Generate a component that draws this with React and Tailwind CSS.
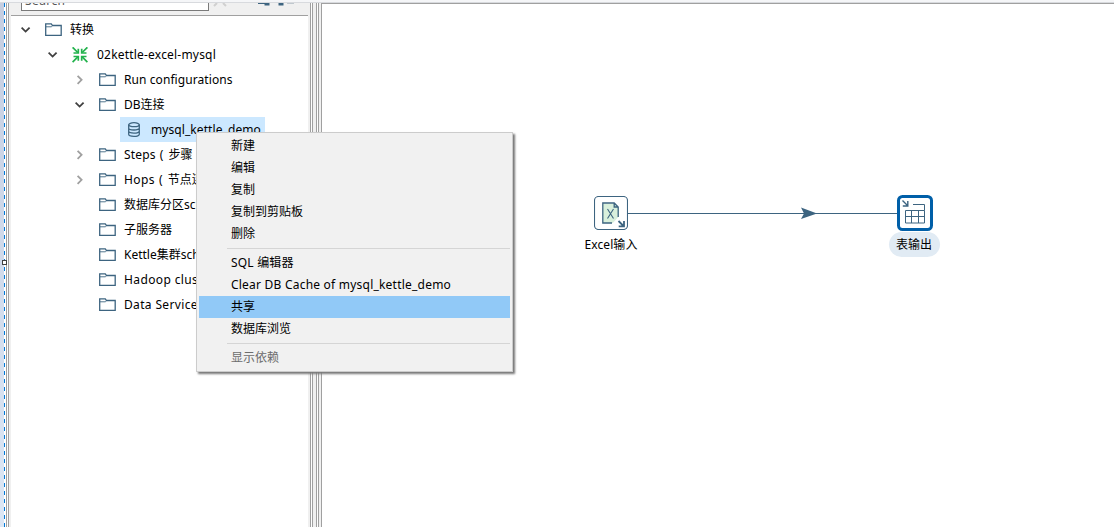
import React from 'react';

const FONT = "font-['Noto_Sans','Noto_Sans_CJK_SC',sans-serif]";

function Chevron({ open }) {
  return (
    <svg className="h-[10px] w-[10px] shrink-0" viewBox="0 0 10 10" fill="none" strokeWidth="1.8">
      {open ? <path d="M.6 2.6l4 4 4-4" stroke="#404040" /> : <path d="M2.6 .8l4 4-4 4" stroke="#a0a0a0" />}
    </svg>
  );
}

function Folder() {
  return (
    <svg className="h-[14px] w-[17px] shrink-0" viewBox="0 0 17 14" fill="none" stroke="#3d6480">
      <path d="M.7 12.400V.8h5.600l1.200 1.700h8.700v9.900z" strokeWidth="1.3" />
      <path d="M1 3.800h5.300l1.300-1.200" strokeWidth=".9" />
    </svg>
  );
}

function Transform() {
  return (
    <svg className="h-4 w-4 shrink-0" viewBox="0 0 16 16" fill="none" stroke="#22b24c" strokeWidth="1.7">
      <path d="M.6 .3l5.2 5.2M15.4 .3l-5.2 5.2M.6 15.1l5.2-5.2M15.4 15.1l-5.2-5.2" />
      <path d="M6.3 1.8v4.2H1.5M9.7 1.8v4.2h4.8M6.3 13.8V9.5H1.5M9.7 13.8V9.5h4.8" />
    </svg>
  );
}

function Database() {
  return (
    <svg className="h-4 w-[14px] shrink-0" viewBox="0 0 14 16" fill="none" stroke="#3d6480" strokeWidth="1.3">
      <ellipse cx="7" cy="2.7" rx="5.3" ry="2" />
      <path d="M1.7 2.7v9.6c0 1.3 2.2 2.1 5.3 2.1s5.3-.8 5.3-2.1V2.7M1.7 5.9C1.7 7.2 3.9 8 7 8s5.3-.8 5.3-2.1M1.7 9.1c0 1.3 2.2 2.1 5.3 2.1s5.3-.8 5.3-2.1" />
    </svg>
  );
}

function Row({ indent, state, icon, children, spacing = '' }) {
  return (
    <div className={`flex h-[25px] items-center ${indent}`}>
      <span className="mr-[14px] flex w-[10px] shrink-0">{state && <Chevron open={state === 'open'} />}</span>
      {icon || <Folder />}
      <span className={`ml-2 whitespace-pre ${spacing}`}>{children}</span>
    </div>
  );
}

function MenuItem({ children, active, disabled, spacing = '' }) {
  return (
    <div className={`mx-[2px] flex h-[22px] items-center pl-8 ${active ? 'bg-[#91c9f7]' : ''} ${disabled ? 'text-[#6d6d6d]' : ''}`}>
      <span className={spacing}>{children}</span>
    </div>
  );
}

function Separator() {
  return <div className="mr-[2px] ml-[30px] flex h-[7px] items-center"><div className="h-px w-full bg-[#d5d5d5]" /></div>;
}

function TreePanel() {
  return (
    <div className="flex w-[297px] shrink-0 flex-col">
      <div className="flex h-3 shrink-0 items-start overflow-hidden pl-[10px]">
        <div className="flex h-2 w-[188px] items-end overflow-hidden border-x border-b border-[#7a7a7a] bg-white pl-[3px]">
          <span className="mb-1 leading-[10px] tracking-[0.4px] text-[#555]">Search</span>
        </div>
        <svg className="ml-1 h-[4px] w-[84px]" viewBox="0 0 84 4" fill="none">
          <path d="M1 3l3-3M13 3l-3-3" stroke="#d0d0d0" strokeWidth="2" />
          <path d="M45 .5h7M54 .5h2" stroke="#3d6480" strokeWidth="1" />
          <path d="M51.5 0h5v2.5h-5zM65.500 0h5v2.500h-5z" fill="#3d6480" />
          <path d="M74 .5h7" stroke="#c0c8ce" />
        </svg>
      </div>
      <div className="h-px bg-[#a0a0a0]" />
      <div className="min-h-0 grow bg-white pt-[1px]">
        <Row indent="pl-[10px]" state="open">转换</Row>
        <Row indent="pl-[37px]" state="open" icon={<Transform />} spacing="pl-px tracking-[0.2px]">02kettle-excel-mysql</Row>
        <Row indent="pl-16" state="closed" spacing="tracking-[0.08px]">Run configurations</Row>
        <Row indent="pl-16" state="open">DB连接</Row>
        <div className="ml-[109px] flex h-[25px] w-[145px] items-center bg-[#cce8ff] pl-[7px]">
          <Database />
          <span className="ml-[10px] tracking-[0.08px]">mysql_kettle_demo</span>
        </div>
        <Row indent="pl-16" state="closed"><span className="tracking-[0.15px]">Steps</span><span className="tracking-[1px]"> ( </span>步骤<span className="pl-1"> )</span></Row>
        <Row indent="pl-16" state="closed"><span className="tracking-[0.4px]">Hops</span><span className="tracking-[1px]"> ( </span>节点连接 )</Row>
        <Row indent="pl-16">数据库分区schemas</Row>
        <Row indent="pl-16">子服务器</Row>
        <Row indent="pl-16">Kettle集群schemas</Row>
        <Row indent="pl-16" spacing="tracking-[0.38px]">Hadoop clusters</Row>
        <Row indent="pl-16" spacing="tracking-[0.35px]">Data Services</Row>
      </div>
    </div>
  );
}

function Canvas() {
  return (
    <div className="relative min-w-0 grow border-t border-l border-[#a0a0a0] bg-white">
      <svg className="absolute top-[202px] left-[306px] h-[14px] w-[270px]" viewBox="0 0 270 14">
        <path d="M0 7.5h270" stroke="#3d6480" />
        <path d="M173 1.5l16 6-16 5.5 3-5.5z" fill="#3d6480" />
      </svg>
      <div className="absolute top-[192px] left-[254px] flex w-[70px] flex-col items-center">
        <svg className="h-[34px] w-[34px]" viewBox="0 0 34 34" fill="none" stroke="#3d6480">
          <rect x=".5" y=".5" width="33" height="33" rx="4" fill="#fff" strokeWidth="1.1" />
          <path d="M8.8 7.500h12l4 4v9l-6 6.500h-10z" fill="#d9f0dc" stroke="none" />
          <path d="M18 27H8.800V7h11.400l4 4v10M20.200 7v4h4" strokeWidth="1.3" />
          <path d="M13.500 13l6 9.500M19.500 13l-6 9.500" strokeWidth="1.1" />
          <path d="M24.500 25l5 5M30 25v5.300h-5.300" strokeWidth="1.8" />
        </svg>
        <span className="mt-[5px] flex h-[19px] items-center whitespace-nowrap tracking-[0.1px]">Excel输入</span>
      </div>
      <div className="absolute top-[191px] left-[566px] flex w-[52px] flex-col items-center">
        <svg className="ml-px h-9 w-9" viewBox="0 0 36 36" fill="none" stroke="#3d6480">
          <rect x="1.5" y="1.5" width="33" height="33" rx="4" fill="#fff" stroke="#005fa8" strokeWidth="3" />
          <path d="M8.500 15.500H27.500v12.500H8.500zM8.500 21.500H27.500M14.500 15.500v12.500M21.500 15.500v12.500M16 9.500H27.500v6" strokeWidth="1" />
          <path d="M5.500 5.500l5 5M10.800 6v5h-5" strokeWidth="1.4" />
        </svg>
        <span className="mt-[1px] flex h-[25px] w-[51px] items-center justify-center rounded-full bg-[#e1ebf4] pt-px">表输出</span>
      </div>
    </div>
  );
}

export default function App() {
  return (
    <div className={`relative flex h-[527px] w-[1114px] flex-col overflow-hidden bg-[#f0f0f0] text-[12px] leading-4 text-black ${FONT}`}>
      <div className="h-[3px] shrink-0 border-b border-[#d8dade] bg-[#f5f6f8]" />
      <div className="flex min-h-0 grow">
        <div className="w-1 shrink-0 bg-linear-to-b from-[#c5cee1] to-[#dce7f5]" />
        <div className="w-px shrink-0 bg-[repeating-linear-gradient(#0078d7_0_4px,#fff_4px_8px)]" />
        <div className="flex w-[6px] shrink-0">
          <div className="w-px bg-white" />
          <div className="w-px bg-[#a0a0a0]" />
          <div className="w-px bg-white" />
          <div className="w-px bg-[#a0a0a0]" />
        </div>
        <TreePanel />
        <div className="flex w-[13px] shrink-0">
          <div className="ml-[2px] w-[3px] border-x border-[#a0a0a0] bg-white" />
          <div className="ml-[3px] w-[3px] border-x border-[#a0a0a0] bg-white" />
        </div>
        <Canvas />
      </div>
      <div className="absolute top-[260px] left-[2px] h-[5px] w-[5px] border border-[#404040] bg-white" />
      <div className="absolute top-[132px] left-[196px] h-[240px] w-[317px] border border-[#ccc] bg-[#f1f1f1] pt-[2px] shadow-[2px_2px_2px_#777]">
        <MenuItem>新建</MenuItem>
        <MenuItem>编辑</MenuItem>
        <MenuItem>复制</MenuItem>
        <MenuItem>复制到剪贴板</MenuItem>
        <MenuItem>删除</MenuItem>
        <Separator />
        <MenuItem spacing="tracking-[0.2px]">SQL 编辑器</MenuItem>
        <MenuItem spacing="tracking-[0.22px]">Clear DB Cache of mysql_kettle_demo</MenuItem>
        <MenuItem active>共享</MenuItem>
        <MenuItem>数据库浏览</MenuItem>
        <Separator />
        <MenuItem disabled>显示依赖</MenuItem>
      </div>
    </div>
  );
}
